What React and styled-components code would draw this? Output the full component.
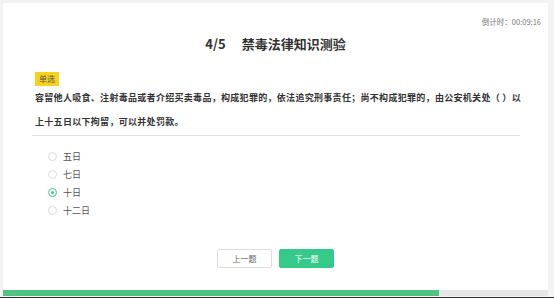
import React from "react";
import styled, { createGlobalStyle } from "styled-components";

const GlobalStyle = createGlobalStyle`
  html, body {
    margin: 0;
    padding: 0;
    background: #f3f3f3;
    font-family: "Noto Sans CJK SC", "Noto Sans", sans-serif;
  }
`;

const Page = styled.div`
  width: 554px;
  height: 298px;
  display: flex;
  flex-direction: column;
  padding: 3px 6px 0 3px;
  box-sizing: border-box;
  overflow: hidden;
`;

const Card = styled.div`
  flex: 1;
  background: #fff;
  display: flex;
  flex-direction: column;
  padding: 14px 7px 0 29px;
`;

const Timer = styled.div`
  align-self: flex-end;
  font-size: 7.5px;
  color: #777;
  line-height: 10px;
  height: 10px;
`;

const Title = styled.h1`
  margin: 8px 0 0 -22px;
  text-align: center;
  font-size: 13px;
  font-weight: 700;
  color: #333;
  line-height: 18px;
  span {
    margin-right: 16px;
  }
`;

const Tag = styled.div`
  align-self: flex-start;
  margin: 19px 0 0 3px;
  background: #f7d21c;
  color: #555;
  font-size: 8px;
  line-height: 14px;
  padding: 0 4px;
`;

const Question = styled.p`
  margin: 0;
  width: 488px;
  padding: 0 0 1px 3px;
  box-sizing: border-box;
  white-space: nowrap;
  font-size: 9px;
  font-weight: 600;
  letter-spacing: 0.3px;
  line-height: 24px;
  color: #333;
  border-bottom: 1px solid #e2e2e2;
`;

const Options = styled.div`
  display: flex;
  flex-direction: column;
  margin: 11px 0 0 16px;
`;

const Option = styled.label`
  display: flex;
  align-items: center;
  gap: 6px;
  height: 18px;
  font-size: 9px;
  color: #555;
`;

const Radio = styled.span`
  width: 7px;
  height: 7px;
  border-radius: 50%;
  border: 1px solid ${(p) => (p.checked ? "#3cc88a" : "#dcdcdc")};
  display: flex;
  align-items: center;
  justify-content: center;
  &::after {
    content: "";
    width: 3px;
    height: 3px;
    border-radius: 50%;
    background: ${(p) => (p.checked ? "#3cc88a" : "transparent")};
  }
`;

const Actions = styled.div`
  display: flex;
  justify-content: center;
  gap: 7px;
  margin: 30px 0 0 -22px;
`;

const Button = styled.button`
  width: 55px;
  height: 19px;
  padding: 0;
  font-family: inherit;
  font-size: 8px;
  border-radius: 2px;
  border: 1px solid ${(p) => (p.primary ? "#35c98a" : "#dedede")};
  background: ${(p) => (p.primary ? "#35c98a" : "#fff")};
  color: ${(p) => (p.primary ? "#fff" : "#666")};
`;

const Progress = styled.div`
  height: 6px;
  background: #e6e6e6;
  flex-shrink: 0;
`;

const Fill = styled.div`
  height: 100%;
  background: #4fc381;
`;

const BottomLine = styled.div`
  height: 1px;
  background: #333;
  margin: 1px -6px 0 -3px;
  flex-shrink: 0;
`;

const options = [
  { label: "五日" },
  { label: "七日" },
  { label: "十日", checked: true },
  { label: "十二日" },
];

export default function App() {
  return (
    <Page>
      <GlobalStyle />
      <Card>
        <Timer>倒计时：00:09:16</Timer>
        <Title>
          <span>4/5</span>禁毒法律知识测验
        </Title>
        <Tag>单选</Tag>
        <Question>
          容留他人吸食、注射毒品或者介绍买卖毒品，构成犯罪的，依法追究刑事责任；尚不构成犯罪的，由公安机关处（ ）以
          <br />
          上十五日以下拘留，可以并处罚款。
        </Question>
        <Options>
          {options.map((o) => (
            <Option key={o.label}>
              <Radio checked={o.checked} />
              {o.label}
            </Option>
          ))}
        </Options>
        <Actions>
          <Button>上一题</Button>
          <Button primary>下一题</Button>
        </Actions>
      </Card>
      <Progress>
        <Fill style={{ width: `${(4 / 5) * 100}%` }} />
      </Progress>
      <BottomLine />
    </Page>
  );
}
